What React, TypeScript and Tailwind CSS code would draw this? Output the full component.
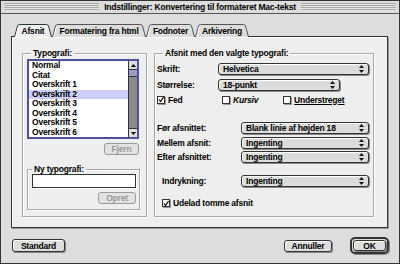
import React from "react";

const styles = ["Normal", "Citat", "Overskrift 1", "Overskrift 2", "Overskrift 3", "Overskrift 4", "Overskrift 5", "Overskrift 6"];

function Arrows() {
  return (
    <svg width="5" height="8" viewBox="0 0 5 8" className="ml-auto mr-[4px] shrink-0">
      <path d="M2.5 0 L5 3 H0 Z" fill="#111" />
      <path d="M0 5 H5 L2.5 8 Z" fill="#111" />
    </svg>
  );
}

function Popup({ value, className }: { value: string; className: string }) {
  return (
    <div className={`flex h-[12px] items-center rounded-[3px] border border-[#333] bg-[#dcdcdc] pl-[4px] shadow-[1px_1px_0_#888,inset_1px_1px_0_#fff] ${className}`}>
      <span className="leading-none">{value}</span>
      <Arrows />
    </div>
  );
}

function Check({ checked }: { checked?: boolean }) {
  return (
    <span className="flex h-[8px] w-[8px] shrink-0 items-center justify-center border border-[#333] bg-white shadow-[1px_1px_0_#999]">
      {checked && (
        <svg width="7" height="7" viewBox="0 0 7 7">
          <path d="M1 3.5 L3 5.8 L6.5 0.8" stroke="#000" strokeWidth="1.3" fill="none" />
        </svg>
      )}
    </span>
  );
}

function Button({ label, className, disabled }: { label: string; className: string; disabled?: boolean }) {
  return (
    <div
      className={`flex items-center justify-center rounded-[3px] border ${
        disabled ? "border-[#9a9a9a] text-[#999] bg-[#e2e2e2]" : "border-[#333] bg-[#dddddd] shadow-[1px_1px_0_#888,inset_1px_1px_0_#fff]"
      } ${className}`}
    >
      {label}
    </div>
  );
}

function Tab({ label, width, active }: { label: string; width: number; active?: boolean }) {
  const h = 13;
  const d = `M0.5 ${h} L3.5 2 Q4 0.5 5.5 0.5 H${width - 5.5} Q${width - 4} 0.5 ${width - 3.5} 2 L${width - 0.5} ${h}`;
  return (
    <div className={`relative flex h-[13px] items-center justify-center ${active ? "z-10" : ""}`} style={{ width }}>
      <svg width={width} height={h + 1} className="absolute left-0 top-0">
        <path d={d + " Z"} fill={active ? "#eeeeee" : "#dddddd"} stroke="none" />
        <path d={d} fill="none" stroke={active ? "#333" : "#555"} strokeWidth="1" />
        <path d={`M1.8 ${h} L4.6 2.2`} stroke="#fff" strokeWidth="1" />
      </svg>
      <span className="relative pt-[1px]">{label}</span>
    </div>
  );
}

export default function App() {
  return (
    <div className="flex h-[264px] w-[400px] flex-col overflow-hidden border border-[#333] bg-[#dddddd] font-['Liberation_Sans',Arial,sans-serif] text-[8.5px] font-bold leading-[10px] tracking-[-0.2px] text-black">
      {/* title bar */}
      <div className="h-[13px] shrink-0 border-b border-[#555] px-[3px] py-[2px]">
        <div className="flex h-[8px] items-center justify-center bg-[repeating-linear-gradient(#a8a8a8_0_1px,#e6e6e6_1px_2px)]">
          <span className="bg-[#dddddd] px-[5px] leading-[10px]">Indstillinger: Konvertering til formateret Mac-tekst</span>
        </div>
      </div>

      <div className="flex flex-col pl-[10px] pt-[10px]">
        {/* tabs */}
        <div className="relative -mb-px ml-[3px] flex">
          <Tab label="Afsnit" width={38} active />
          <Tab label="Formatering fra html" width={94} />
          <Tab label="Fodnoter" width={49} />
          <Tab label="Arkivering" width={54} />
        </div>

        {/* panel */}
        <div className="flex h-[192px] w-[377px] gap-[7px] border border-[#333] bg-[#eeeeee] pl-[10px] pt-[11px] shadow-[1px_1px_0_#999,inset_1px_1px_0_#fff]">
          <fieldset className="flex h-[169px] w-[125px] flex-col border border-[#a8a8a8] pb-[7px] pl-[4px] shadow-[inset_1px_1px_0_#fff,1px_1px_0_#fff]">
            <legend className="ml-[4px] px-[2px] leading-[10px]">Typografi:</legend>
            <div className="mt-[1px] flex h-[80px] w-[112px] border-2 border-[#50509c] bg-white">
              <div className="flex-1">
                {styles.map((s) => (
                  <div key={s} className={`h-[9.5px] pl-[3px] leading-[9.5px] ${s === "Overskrift 2" ? "bg-[#ccccff]" : ""}`}>
                    {s}
                  </div>
                ))}
              </div>
              <div className="flex w-[9px] flex-col border-l border-[#333]">
                <div className="flex h-[9px] items-center justify-center border-b border-[#333] bg-[#dddddd]">
                  <svg width="5" height="3" viewBox="0 0 5 3"><path d="M2.5 0 L5 3 H0 Z" fill="#000" /></svg>
                </div>
                <div className="h-[7px] border-b border-[#333] bg-[#9c9cc8]" />
                <div className="flex-1 bg-[#8c8c8c]" />
                <div className="flex h-[9px] items-center justify-center border-t border-[#333] bg-[#dddddd]">
                  <svg width="5" height="3" viewBox="0 0 5 3"><path d="M0 0 H5 L2.5 3 Z" fill="#000" /></svg>
                </div>
              </div>
            </div>
            <Button label="Fjern" disabled className="ml-[77px] mt-[4px] h-[12px] w-[35px]" />
            <fieldset className="mt-[9px] flex w-[113px] flex-col border border-[#a8a8a8] pb-[5px] shadow-[inset_1px_1px_0_#fff,1px_1px_0_#fff]">
              <legend className="ml-[4px] px-[2px] leading-[10px]">Ny typografi:</legend>
              <div className="ml-[4px] h-[14px] w-[104px] border border-[#333] bg-white shadow-[1px_1px_0_#fff]" />
              <Button label="Opret" disabled className="ml-[70px] mt-[4px] h-[12px] w-[38px]" />
            </fieldset>
          </fieldset>

          <fieldset className="flex h-[169px] w-[220px] flex-col border border-[#a8a8a8] pl-[2px] pr-[4px] shadow-[inset_1px_1px_0_#fff,1px_1px_0_#fff]">
            <legend className="ml-[6px] px-[2px] leading-[10px]">Afsnit med den valgte typografi:</legend>
            <div className="mt-[5px] flex items-center">
              <span className="w-[61px]">Skrift:</span>
              <Popup value="Helvetica" className="w-[151px]" />
            </div>
            <div className="mt-[4px] flex items-center">
              <span className="w-[61px]">Størrelse:</span>
              <Popup value="18-punkt" className="w-[122px]" />
            </div>
            <div className="mt-[4px] flex h-[9px] items-center">
              <div className="flex w-[65px] items-center gap-[3px]">
                <Check checked />
                <span>Fed</span>
              </div>
              <div className="flex w-[61px] items-center gap-[3px]">
                <Check />
                <span className="italic">Kursiv</span>
              </div>
              <div className="flex items-center gap-[3px]">
                <Check />
                <span className="underline">Understreget</span>
              </div>
            </div>
            <div className="mt-[18px] flex items-center">
              <span className="w-[84px]">Før afsnittet:</span>
              <Popup value="Blank linie af højden 18" className="w-[128px]" />
            </div>
            <div className="mt-[3px] flex items-center">
              <span className="w-[84px]">Mellem afsnit:</span>
              <Popup value="Ingenting" className="w-[128px]" />
            </div>
            <div className="mt-[2px] flex items-center">
              <span className="w-[84px]">Efter afsnittet:</span>
              <Popup value="Ingenting" className="w-[128px]" />
            </div>
            <div className="mt-[12px] flex items-center">
              <span className="ml-[5px] w-[79px]">Indrykning:</span>
              <Popup value="Ingenting" className="w-[128px]" />
            </div>
            <div className="ml-[5px] mt-[11px] flex items-center gap-[3px]">
              <Check checked />
              <span>Udelad tomme afsnit</span>
            </div>
          </fieldset>
        </div>

        {/* bottom buttons */}
        <div className="mt-[9px] flex items-center pr-[10px]">
          <Button label="Standard" className="ml-[1px] h-[13px] w-[53px]" />
          <Button label="Annuller" className="ml-auto h-[12px] w-[48px]" />
          <div className="ml-[18px] rounded-[5px] border-[2px] border-[#333] p-[1px] shadow-[1px_1px_0_#888]">
            <Button label="OK" className="h-[11px] w-[33px]" />
          </div>
        </div>
      </div>
    </div>
  );
}
